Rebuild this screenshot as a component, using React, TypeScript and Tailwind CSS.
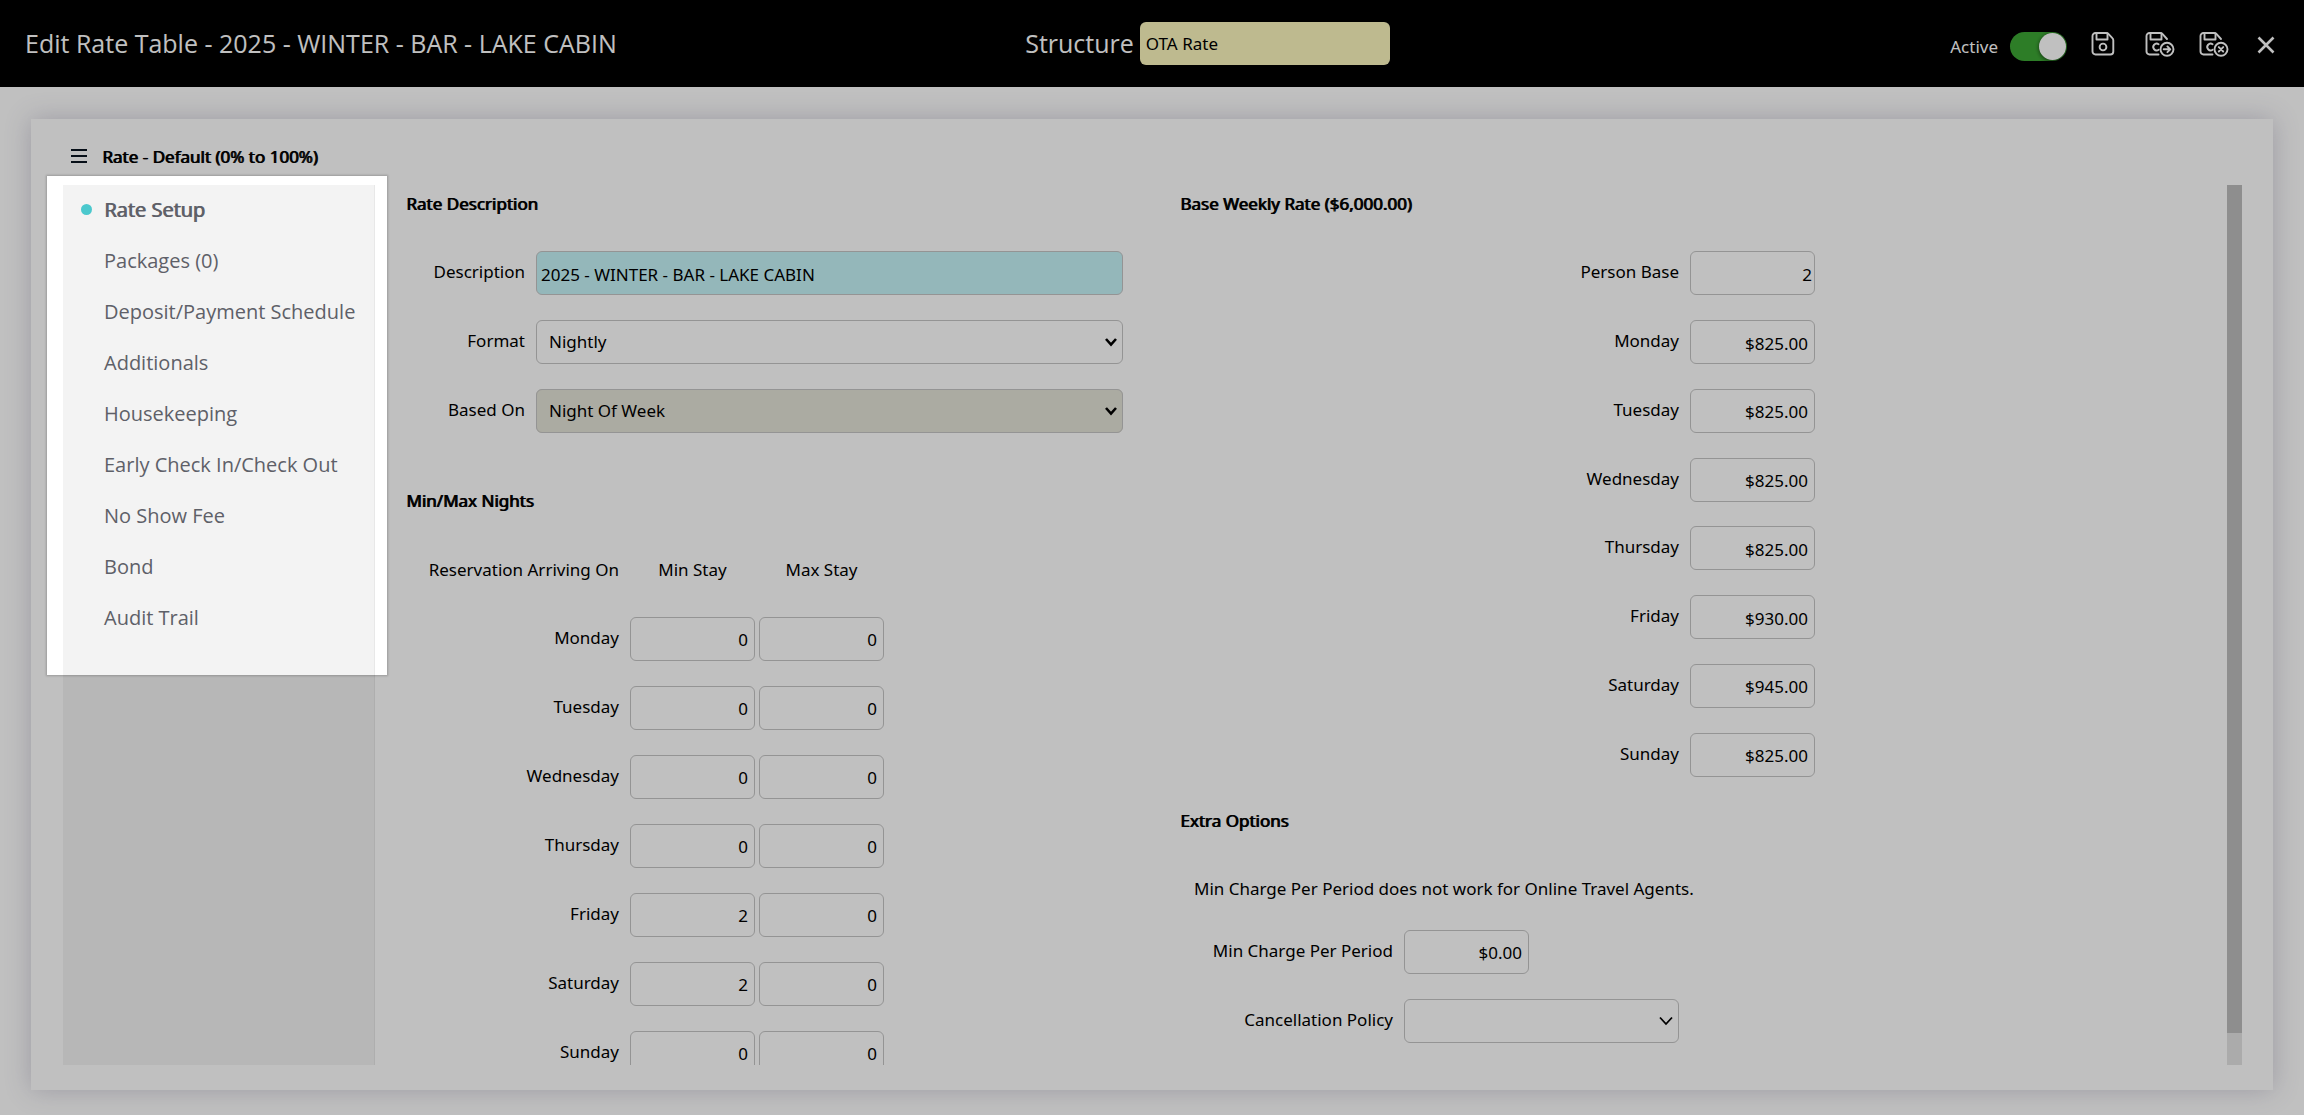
import { useId, useState } from "react";
import type { ReactNode } from "react";

const MENU_ITEMS = [
  "Rate Setup",
  "Packages (0)",
  "Deposit/Payment Schedule",
  "Additionals",
  "Housekeeping",
  "Early Check In/Check Out",
  "No Show Fee",
  "Bond",
  "Audit Trail",
];

const NIGHTS = [
  { day: "Monday", min: "0", max: "0" },
  { day: "Tuesday", min: "0", max: "0" },
  { day: "Wednesday", min: "0", max: "0" },
  { day: "Thursday", min: "0", max: "0" },
  { day: "Friday", min: "2", max: "0" },
  { day: "Saturday", min: "2", max: "0" },
  { day: "Sunday", min: "0", max: "0" },
];

const RATES = [
  { day: "Monday", rate: "$825.00" },
  { day: "Tuesday", rate: "$825.00" },
  { day: "Wednesday", rate: "$825.00" },
  { day: "Thursday", rate: "$825.00" },
  { day: "Friday", rate: "$930.00" },
  { day: "Saturday", rate: "$945.00" },
  { day: "Sunday", rate: "$825.00" },
];

const bodyText = "font-['Noto_Sans','Open_Sans',sans-serif] text-[17px] leading-6";

const fieldBox = `h-11 rounded-md border border-[#c5c5c5] text-black outline-none ${bodyText}`;

function SectionTitle({ children }: { children: ReactNode }) {
  return (
    <h2 className={`${bodyText} [text-shadow:1px_0_currentColor]`}>
      {children}
    </h2>
  );
}

function FieldLabel({
  htmlFor,
  children,
}: {
  htmlFor: string;
  children: ReactNode;
}) {
  return (
    <label htmlFor={htmlFor} className="pb-0.5 text-right">
      {children}
    </label>
  );
}

function NumberBox({
  id,
  value,
  label,
  tight,
}: {
  id?: string;
  value: string;
  label?: string;
  tight?: boolean;
}) {
  return (
    <input
      id={id}
      aria-label={label}
      defaultValue={value}
      className={`${fieldBox} block w-[125px] shrink-0 bg-white pt-0.5 text-right ${tight ? "pr-0.5" : "pr-1.5"}`}
    />
  );
}

function SelectBox({
  id,
  value,
  className,
  thin,
}: {
  id: string;
  value: string;
  className: string;
  thin?: boolean;
}) {
  return (
    <div className={`relative ${className}`}>
      <select
        id={id}
        defaultValue={value}
        className={`${fieldBox} block w-full appearance-none bg-inherit pl-3 pr-8`}
      >
        <option value={value}>{value}</option>
      </select>
      <svg
        width="14"
        height="10"
        viewBox="0 0 14 10"
        fill="none"
        stroke="black"
        strokeWidth={thin ? 1.8 : 2.6}
        className={`pointer-events-none absolute top-[17px] ${thin ? "right-1.5" : "right-[5px]"}`}
      >
        <path d={thin ? "M1 1.5 7 8l6-6.5" : "M2 2 7 7.6 12 2"} />
      </svg>
    </div>
  );
}

function Toggle() {
  const [on, setOn] = useState(true);
  return (
    <label className={`mt-1.5 flex items-center gap-3 ${bodyText}`}>
      Active
      <input
        type="checkbox"
        checked={on}
        onChange={(e) => setOn(e.target.checked)}
        className="peer sr-only"
      />
      <span className="flex h-[29px] w-[57px] items-center rounded-full bg-gray-400 px-px peer-checked:justify-end peer-checked:bg-[#3da735]">
        <span className="size-[27px] rounded-full bg-white shadow-[0_1px_4px_rgba(0,0,0,0.6)]" />
      </span>
    </label>
  );
}

function SaveIcon({ badge }: { badge?: "next" | "close" }) {
  return (
    <svg
      width="30"
      height="25"
      viewBox="0 0 30 25"
      fill="none"
      stroke="currentColor"
      strokeWidth="1.9"
      strokeLinejoin="round"
      strokeLinecap="round"
    >
      {badge ? (
        <>
          <path d="M13.5 22.5H4.5a3 3 0 0 1-3-3V4a3 3 0 0 1 3-3h10.8a3 3 0 0 1 2.1.9L22 7" />
          <path d="M13.6 12.2a3.4 3.4 0 1 0 0 5.6" />
          <circle cx="22" cy="17.3" r="6.5" />
          {badge === "next" ? (
            <path d="M18.7 17.3h6.4M22.4 14.4l2.9 2.9-2.9 2.9" />
          ) : (
            <path d="m19.8 15.1 4.4 4.4M24.2 15.1l-4.4 4.4" />
          )}
        </>
      ) : (
        <>
          <path d="M4.5 1h10.8a3 3 0 0 1 2.1.9l4 4.2a3 3 0 0 1 .9 2.1v11.3a3 3 0 0 1-3 3H4.5a3 3 0 0 1-3-3V4a3 3 0 0 1 3-3z" />
          <circle cx="12" cy="15" r="3.4" />
        </>
      )}
      <path d="M5.5 1v6.5h11V1.5" />
    </svg>
  );
}

function Header() {
  return (
    <header className="flex h-[87px] items-center bg-black pl-[25px] pr-[29px] text-white">
      <h1 className="flex-[1000] pb-0.5 text-[25px] leading-8">
        Edit Rate Table - 2025 - WINTER - BAR - LAKE CABIN
      </h1>
      <div className="flex items-center gap-1.5">
        <label htmlFor="structure" className="pb-0.5 text-[25px] leading-8">
          Structure
        </label>
        <input
          id="structure"
          defaultValue="OTA Rate"
          className={`h-[43px] w-[250px] rounded-md bg-[#fdf8be] px-1.5 text-black outline-none ${bodyText}`}
        />
      </div>
      <div className="flex flex-[885] items-center justify-end">
        <Toggle />
        <button type="button" aria-label="Save" className="mt-0.5 ml-6">
          <SaveIcon />
        </button>
        <button
          type="button"
          aria-label="Save and continue"
          className="mt-0.5 ml-6"
        >
          <SaveIcon badge="next" />
        </button>
        <button
          type="button"
          aria-label="Save and close"
          className="mt-0.5 ml-6"
        >
          <SaveIcon badge="close" />
        </button>
        <button type="button" aria-label="Close" className="mt-0.5 ml-7">
          <svg
            width="18"
            height="18"
            viewBox="0 0 18 18"
            fill="none"
            stroke="currentColor"
            strokeWidth="2.6"
          >
            <path d="M1.5 1.5l15 15M16.5 1.5l-15 15" />
          </svg>
        </button>
      </div>
    </header>
  );
}

function Sidebar() {
  return (
    <aside className="relative w-[312px] shrink-0 border-r border-[#e8e8e8] bg-[#f3f3f3]">
      <nav className="grid h-[460px] grid-rows-9">
        {MENU_ITEMS.map((item, i) => (
          <a
            key={item}
            href="#"
            className="flex items-center pb-0.5 pl-[18px] text-xl leading-7 text-[#5e6068]"
          >
            <span
              className={`mr-3 size-[11px] rounded-full ${i === 0 ? "bg-[#4bc8cd]" : ""}`}
            />
            <span className={i === 0 ? "[text-shadow:1px_0_currentColor]" : ""}>
              {item}
            </span>
          </a>
        ))}
      </nav>
      {/* Spotlight: everything outside of it is dimmed */}
      <div className="pointer-events-none absolute -top-[9px] -left-4 z-10 h-[499px] w-[340px] shadow-[0_0_2px_1px_rgba(0,0,0,0.2),0_0_0_9999px_rgba(0,0,0,0.247)]" />
    </aside>
  );
}

function RateDescription() {
  const id = useId();
  return (
    <section>
      <SectionTitle>Rate Description</SectionTitle>
      <div
        className={`mt-[23px] grid h-[206px] grid-cols-[119px_1fr] grid-rows-3 items-center gap-x-[11px] pr-[57px] ${bodyText}`}
      >
        <FieldLabel htmlFor={`${id}-desc`}>Description</FieldLabel>
        <input
          id={`${id}-desc`}
          defaultValue="2025 - WINTER - BAR - LAKE CABIN"
          className={`${fieldBox} w-full bg-[#c5f3f8] px-1 pt-0.5`}
        />
        <FieldLabel htmlFor={`${id}-format`}>Format</FieldLabel>
        <SelectBox
          id={`${id}-format`}
          value="Nightly"
          className="rounded-md bg-white"
        />
        <FieldLabel htmlFor={`${id}-based`}>Based On</FieldLabel>
        <SelectBox
          id={`${id}-based`}
          value="Night Of Week"
          className="rounded-md bg-[#e4e3d7]"
        />
      </div>
    </section>
  );
}

function NightsTable() {
  return (
    <section className="mt-11">
      <SectionTitle>Min/Max Nights</SectionTitle>
      <table className={`mt-[22px] ${bodyText}`}>
        <thead>
          <tr className="h-[69px]">
            <th className="w-[213px] text-right font-normal">
              Reservation Arriving On
            </th>
            <th className="w-[140px] pr-1 pl-[11px] font-normal">Min Stay</th>
            <th className="w-[125px] font-normal">Max Stay</th>
          </tr>
        </thead>
        <tbody>
          {NIGHTS.map(({ day, min, max }) => (
            <tr key={day} className="h-[69px]">
              <th className="pb-0.5 text-right font-normal">{day}</th>
              <td className="pl-[11px]">
                <NumberBox value={min} label={`${day} min stay`} />
              </td>
              <td>
                <NumberBox value={max} label={`${day} max stay`} />
              </td>
            </tr>
          ))}
        </tbody>
      </table>
    </section>
  );
}

function WeeklyRates() {
  const id = useId();
  return (
    <section>
      <SectionTitle>Base Weekly Rate ($6,000.00)</SectionTitle>
      <div
        className={`mt-[23px] grid h-[550px] grid-cols-[499px_1fr] grid-rows-8 items-center gap-x-[11px] ${bodyText}`}
      >
        <FieldLabel htmlFor={`${id}-base`}>Person Base</FieldLabel>
        <NumberBox id={`${id}-base`} value="2" tight />
        {RATES.map(({ day, rate }) => (
          <div key={day} className="contents">
            <FieldLabel htmlFor={`${id}-${day}`}>{day}</FieldLabel>
            <NumberBox id={`${id}-${day}`} value={rate} />
          </div>
        ))}
      </div>
    </section>
  );
}

function ExtraOptions() {
  const id = useId();
  return (
    <section className="mt-5">
      <SectionTitle>Extra Options</SectionTitle>
      <p className={`mt-11 pl-3.5 ${bodyText}`}>
        Min Charge Per Period does not work for Online Travel Agents.
      </p>
      <div
        className={`mt-4 grid h-[138px] grid-cols-[213px_1fr] grid-rows-2 items-center gap-x-[11px] ${bodyText}`}
      >
        <FieldLabel htmlFor={`${id}-min`}>Min Charge Per Period</FieldLabel>
        <NumberBox id={`${id}-min`} value="$0.00" />
        <FieldLabel htmlFor={`${id}-policy`}>Cancellation Policy</FieldLabel>
        <SelectBox
          id={`${id}-policy`}
          value=""
          className="w-[275px] rounded-md bg-white"
          thin
        />
      </div>
    </section>
  );
}

export default function App() {
  return (
    <div className="flex h-screen flex-col overflow-hidden bg-white font-['Open_Sans',sans-serif] text-black">
      <Header />
      <main className="mx-[31px] mt-8 mb-[25px] flex min-h-0 flex-1 flex-col pr-[31px] pb-[25px] pl-8 shadow-[0_0_24px_rgba(100,94,130,0.3)]">
        <div className="flex h-[66px] items-center gap-[15px] pt-2.5 pl-2">
          <button type="button" aria-label="Toggle menu">
            <svg
              width="16"
              height="17"
              viewBox="0 0 16 17"
              stroke="#0a1520"
              strokeWidth="2"
            >
              <path d="M0 1h16M0 7h16M0 13h16" />
            </svg>
          </button>
          <SectionTitle>Rate - Default (0% to 100%)</SectionTitle>
        </div>
        <div className="flex min-h-0 flex-1">
          <Sidebar />
          <div className="grid min-w-0 flex-1 grid-cols-[774fr_1047fr] overflow-hidden pt-[7px] pl-[31px]">
            <div>
              <RateDescription />
              <NightsTable />
            </div>
            <div>
              <WeeklyRates />
              <ExtraOptions />
            </div>
          </div>
          <div className="w-[15px] shrink-0 bg-[#e3e3e3]">
            <div className="h-[848px] bg-[#bdbdbd]" />
          </div>
        </div>
      </main>
    </div>
  );
}
